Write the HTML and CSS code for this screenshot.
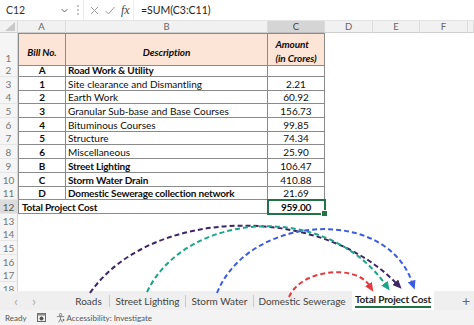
FILE: index.html
```html
<!DOCTYPE html>
<html>
<head>
<meta charset="utf-8">
<link rel="stylesheet" href="styles.css">
</head>
<body>
<div class="app">
  <div class="fbar">
    <div class="namebox"><span>C12</span>
      <svg class="chev" width="7" height="5" viewBox="0 0 7 5"><path d="M0.5 1 L3.5 4 L6.5 1" fill="none" stroke="#666" stroke-width="1"/></svg>
    </div>
    <div class="dots"><i></i><i></i><i></i></div>
    <div class="fbtns">
      <svg width="9" height="9" viewBox="0 0 9 9"><path d="M1 1 L8 8 M8 1 L1 8" stroke="#9a9a9a" stroke-width="1"/></svg>
      <svg width="10" height="9" viewBox="0 0 10 9"><path d="M0.5 5 L3.5 8 L9.5 1" fill="none" stroke="#9a9a9a" stroke-width="1"/></svg>
      <span class="fx">fx</span>
    </div>
    <div class="formula">=SUM(C3:C11)</div>
  </div>

  <div class="sheet">
    <div class="row colhead">
      <div class="corner"><svg width="10" height="9" viewBox="0 0 10 9"><path d="M10 0 L10 9 L0 9 Z" fill="#c9c9c9"/></svg></div>
      <div class="ch">A</div><div class="ch">B</div><div class="ch sel">C</div><div class="ch">D</div><div class="ch">E</div><div class="ch">F</div><div class="ch"></div>
    </div>
    <div class="row r1">
      <div class="rh bottom">1</div>
      <div class="t a th">Bill No.</div>
      <div class="t th">Description</div>
      <div class="t th two">Amount<br>(in Crores)</div>
    </div>
    <div class="row"><div class="rh">2</div><div class="t a ctr b">A</div><div class="t b">Road Work &amp; Utility</div><div class="t ctr"></div></div>
    <div class="row"><div class="rh">3</div><div class="t a ctr b">1</div><div class="t">Site clearance and Dismantling</div><div class="t ctr">2.21</div></div>
    <div class="row"><div class="rh">4</div><div class="t a ctr b">2</div><div class="t">Earth Work</div><div class="t ctr">60.92</div></div>
    <div class="row"><div class="rh">5</div><div class="t a ctr b">3</div><div class="t">Granular Sub-base and Base Courses</div><div class="t ctr">156.73</div></div>
    <div class="row"><div class="rh">6</div><div class="t a ctr b">4</div><div class="t">Bituminous Courses</div><div class="t ctr">99.85</div></div>
    <div class="row"><div class="rh">7</div><div class="t a ctr b">5</div><div class="t">Structure</div><div class="t ctr">74.34</div></div>
    <div class="row"><div class="rh">8</div><div class="t a ctr b">6</div><div class="t">Miscellaneous</div><div class="t ctr">25.90</div></div>
    <div class="row"><div class="rh">9</div><div class="t a ctr b">B</div><div class="t b">Street Lighting</div><div class="t ctr">106.47</div></div>
    <div class="row"><div class="rh">10</div><div class="t a ctr b">C</div><div class="t b">Storm Water Drain</div><div class="t ctr">410.88</div></div>
    <div class="row"><div class="rh">11</div><div class="t a ctr b">D</div><div class="t b">Domestic Sewerage collection network</div><div class="t ctr">21.69</div></div>
    <div class="row"><div class="rh sel">12</div><div class="t a b span2">Total Project Cost</div><div class="t ctr b active">959.00</div></div>
    <div class="row"><div class="rh">13</div></div>
    <div class="row"><div class="rh">14</div></div>
    <div class="row"><div class="rh">15</div></div>
    <div class="row"><div class="rh">16</div></div>
    <div class="row"><div class="rh">17</div></div>
    <div class="row"><div class="rh">18</div></div>
  </div>

  <div class="tabs">
    <div class="nav"><span>&lsaquo;</span><span>&rsaquo;</span></div>
    <div class="tab w1">Roads</div>
    <div class="tab w2">Street Lighting</div>
    <div class="tab w3">Storm Water</div>
    <div class="tab w4 last">Domestic Sewerage</div>
    <div class="tab on"><span>Total Project Cost</span></div>
    <div class="plus">+</div>
  </div>

  <div class="status">
    <span>Ready</span>
    <svg class="macro" width="9" height="9" viewBox="0 0 9 9"><rect x="0.5" y="0.5" width="8" height="8" fill="none" stroke="#666"/><rect x="0.5" y="0.5" width="8" height="2" fill="#888"/><circle cx="4.5" cy="5.5" r="2" fill="#555"/></svg>
    <span class="acc"><svg width="9" height="10" viewBox="0 0 9 10"><circle cx="4.5" cy="1.7" r="1.2" fill="none" stroke="#666" stroke-width="0.8"/><path d="M0.8 3.6 L8.2 3.6 M4.5 3.6 L4.5 6 M4.5 6 L2.6 9.4 M4.5 6 L6.4 9.4" fill="none" stroke="#666" stroke-width="0.8"/><path d="M7.5 5.5 L8 6.5 L9 7 L8 7.5 L7.5 8.5 L7 7.5 L6 7 L7 6.5 Z" fill="#666"/></svg>Accessibility: Investigate</span>
  </div>

  <svg class="arrows" width="474" height="325" viewBox="0 0 474 325">
    <defs>
      <marker id="mPurple" markerWidth="9" markerHeight="8" refX="1" refY="4" orient="auto" markerUnits="userSpaceOnUse"><path d="M0 0 L9 4 L0 8 Z" fill="#3d2566"/></marker>
      <marker id="mTeal" markerWidth="9" markerHeight="8" refX="1" refY="4" orient="auto" markerUnits="userSpaceOnUse"><path d="M0 0 L9 4 L0 8 Z" fill="#1ba589"/></marker>
      <marker id="mBlue" markerWidth="9" markerHeight="8" refX="1" refY="4" orient="auto" markerUnits="userSpaceOnUse"><path d="M0 0 L9 4 L0 8 Z" fill="#3b5be3"/></marker>
      <marker id="mRed" markerWidth="9" markerHeight="8" refX="1" refY="4" orient="auto" markerUnits="userSpaceOnUse"><path d="M0 0 L9 4 L0 8 Z" fill="#e53a3f"/></marker>
    </defs>
    <path d="M90 293 C150 207, 318 203, 396 283" stroke="#3d2566" marker-end="url(#mPurple)"/>
    <path d="M147 292 C185 212, 325 200, 385 284" stroke="#1ba589" marker-end="url(#mTeal)"/>
    <path d="M217 293 C248 215, 385 205, 412 282" stroke="#3b5be3" marker-end="url(#mBlue)"/>
    <path d="M289 297 C302 268, 356 265, 369 285" stroke="#e53a3f" marker-end="url(#mRed)"/>
  </svg>
</div>
</body>
</html>
```

FILE: styles.css
```css
* { box-sizing: border-box; margin: 0; padding: 0; }
html, body { width: 474px; height: 325px; overflow: hidden; background: #fff; }
body { font-family: Lato, "Liberation Sans", sans-serif; color: #111; }
.app { position: relative; width: 474px; height: 325px; display: flex; flex-direction: column; }

/* formula bar */
.fbar { height: 21px; flex: none; display: flex; align-items: center; border-bottom: 1px solid #e2e2e2; font-size: 10.5px; color: #333; }
.namebox { width: 73px; height: 100%; display: flex; align-items: center; justify-content: space-between; padding: 0 5px 0 6px; }
.dots { width: 10px; display: flex; flex-direction: column; align-items: center; gap: 2px; }
.dots i { display: block; width: 2px; height: 2px; background: #b0b0b0; border-radius: 50%; }
.fbtns { width: 51px; height: 100%; display: flex; align-items: center; gap: 6px; padding-left: 6px; border-left: 1px solid #ececec; border-right: 1px solid #ececec; }
.fx { font-family: "Liberation Serif", serif; font-style: italic; font-size: 12px; color: #444; }
.formula { padding-left: 7px; color: #222; }

/* sheet */
.sheet { height: 270px; flex: none; overflow: hidden; }
.row { display: grid; grid-template-columns: 18px 48px 202px 57px 1fr; height: 13.7px; font-size: 10px; }
.row.colhead { grid-template-columns: 18px 48px 202px 57px 48px 47px 48px 1fr; height: 12px; font-size: 9.5px; color: #666; }
.row.r1 { height: 30px; }
.corner { background: #f1f1f1; border-right: 1px solid #d6d6d6; border-bottom: 1px solid #cfcfcf; display: flex; align-items: flex-end; justify-content: flex-end; padding: 0 2px 1px 0; }
.ch { background: #f1f1f1; border-right: 1px solid #dcdcdc; border-bottom: 1px solid #cfcfcf; display: flex; align-items: center; justify-content: center; line-height: 1; }
.ch.sel { background: #d5d5d5; color: #444; border-bottom-color: #bdbdbd; }
.rh { background: #f5f5f5; border-right: 1px solid #d6d6d6; border-bottom: 1px solid #e6e6e6; color: #777; font-size: 10px; display: flex; align-items: center; justify-content: center; padding-top: 1px; }
.rh.bottom { align-items: flex-end; padding-bottom: 1px; }
.rh.sel { background: #dcdcdc; color: #555; }

.t { border-right: 1px solid #8a8a8a; border-bottom: 1px solid #8a8a8a; display: flex; align-items: center; padding: 1px 2px 0; white-space: nowrap; overflow: visible; line-height: 1; color: #0d0d0d; }
.t.a { border-left: 1px solid #8a8a8a; }
.r1 .t { border-top: 1px solid #8a8a8a; background: #fce4d6; }
.th { font-weight: 700; font-style: italic; justify-content: center; letter-spacing: -0.1px; padding-top: 5px; }
.th.two { flex-direction: column; justify-content: center; line-height: 14px; padding-top: 3px; }
.ctr { justify-content: center; }
.b { font-weight: 700; letter-spacing: -0.2px; }
.span2 { grid-column: 2 / span 2; padding-left: 3px; }
.active { position: relative; }
.active::after { content: ""; position: absolute; left: -1px; top: -1px; right: -2px; bottom: -2px; border: 2px solid #217346; }
.active::before { content: ""; position: absolute; right: -4px; bottom: -4px; width: 5px; height: 5px; background: #217346; border: 1px solid #fff; z-index: 1; }

/* tabs */
.tabs { height: 19px; flex: none; background: #efefef; display: flex; align-items: center; font-size: 10px; color: #444; white-space: nowrap; }
.nav { width: 68px; flex: none; display: flex; gap: 14px; padding-left: 14px; color: #aaa; font-size: 14px; line-height: 1; }
.tab { flex: none; height: 12px; line-height: 12px; text-align: center; border-right: 1px solid #c9c9c9; }
.w1 { width: 42px; }
.w2 { width: 76px; }
.w3 { width: 68px; }
.w4 { width: 96px; }
.tab.last { border-right: none; margin-right: 2px; }
.tab.on { width: 82px; height: 19px; line-height: 17px; background: #fff; border: none; font-weight: 700; color: #222; letter-spacing: -0.15px; }
.tab.on span { display: inline-block; border-bottom: 2px solid #217346; line-height: 13px; padding-top: 2px; }
.plus { margin-left: auto; margin-right: 4px; color: #666; font-size: 14px; }

/* status */
.status { height: 15px; flex: none; background: #f3f3f3; display: flex; align-items: center; gap: 10px; padding-left: 5px; font-size: 8px; color: #555; white-space: nowrap; }
.acc { display: flex; align-items: center; gap: 2px; }

/* annotation arrows */
.arrows { position: absolute; left: 0; top: 0; pointer-events: none; }
.arrows path[stroke] { fill: none; stroke-width: 2; stroke-dasharray: 5 3; }
```
